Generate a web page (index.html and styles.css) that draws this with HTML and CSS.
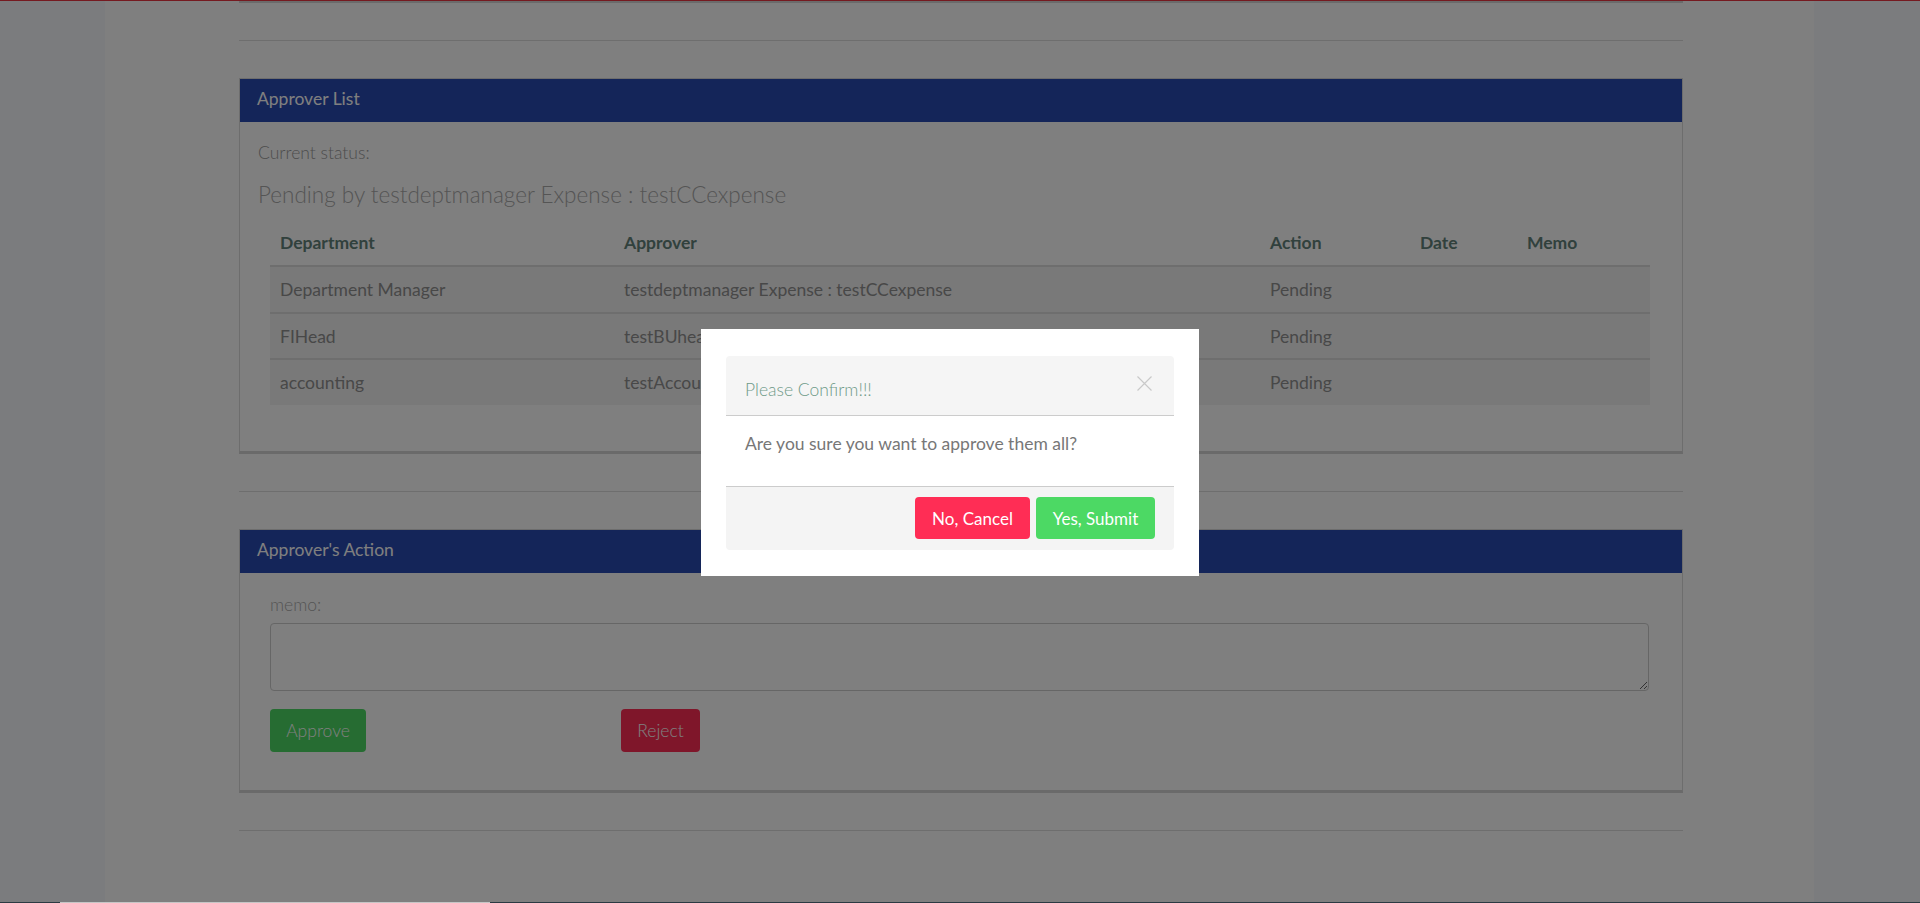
FILE: index.html
```html
<!DOCTYPE html>
<html lang="en">
<head>
<meta charset="utf-8">
<title>Approver List</title>
<link rel="stylesheet" href="styles.css">
</head>
<body>
<div class="topbar"></div>
<div class="main">
  <div class="container">
    <div class="prev-end"></div>
    <div class="divider"></div>

    <section class="panel">
      <div class="panel-heading">Approver List</div>
      <div class="panel-body list-body">
        <div class="status-label">Current status:</div>
        <div class="status-value">Pending by testdeptmanager Expense : testCCexpense</div>
        <table class="approvers">
          <thead>
            <tr>
              <th class="c-dept">Department</th>
              <th class="c-appr">Approver</th>
              <th class="c-act">Action</th>
              <th class="c-date">Date</th>
              <th class="c-memo">Memo</th>
            </tr>
          </thead>
          <tbody>
            <tr><td>Department Manager</td><td>testdeptmanager Expense : testCCexpense</td><td>Pending</td><td></td><td></td></tr>
            <tr><td>FIHead</td><td>testBUhead Expense : testCCexpense</td><td>Pending</td><td></td><td></td></tr>
            <tr><td>accounting</td><td>testAccounting Expense : testCCexpense</td><td>Pending</td><td></td><td></td></tr>
          </tbody>
        </table>
      </div>
    </section>

    <div class="divider"></div>

    <section class="panel">
      <div class="panel-heading">Approver's Action</div>
      <div class="panel-body action-body">
        <label class="memo-label" for="memo">memo:</label>
        <textarea id="memo" class="memo"></textarea>
        <div class="actions">
          <div class="action-cell"><button class="btn btn-approve">Approve</button></div>
          <div class="action-cell"><button class="btn btn-reject">Reject</button></div>
        </div>
      </div>
    </section>

    <div class="divider"></div>
  </div>
</div>

<div class="backdrop"></div>
<div class="modal">
  <div class="modal-inner">
    <div class="modal-header">
      <span class="modal-title">Please Confirm!!!</span>
      <svg class="modal-close" width="15" height="15" viewBox="0 0 15 15"><path d="M0.5 0.5 L14.5 14.5 M14.5 0.5 L0.5 14.5" stroke="#c9c9c9" stroke-width="1.2" fill="none"/></svg>
    </div>
    <div class="modal-body">Are you sure you want to approve them all?</div>
    <div class="modal-footer">
      <button class="mbtn mbtn-cancel">No, Cancel</button>
      <button class="mbtn mbtn-submit">Yes, Submit</button>
    </div>
  </div>
</div>

<div class="bottombar"><div class="bottombar-seg"></div></div>
</body>
</html>
```
FILE: styles.css
```css
html, body {
  margin: 0;
  padding: 0;
  height: 100%;
  overflow: hidden;
}
body {
  background: #f6f8fc;
  font-family: Lato, "Open Sans", "Liberation Sans", sans-serif;
  color: #888;
}
.topbar {
  height: 1px;
  background: #ea3540;
}
.main {
  margin-left: 105px;
  width: 1709px;
  min-height: 902px;
  background: #fff;
}
.container {
  width: 1444px;
  margin-left: 134px;
}
.prev-end {
  height: 0;
  border-bottom: 2px solid #d6d6d6;
}
.divider {
  height: 1px;
  background: #dcdcdc;
  margin: 37px 0;
}
.panel {
  border: 1px solid #dadada;
  border-bottom: 3px solid #d4d4d4;
  margin-bottom: 2px;
}
.panel-heading {
  height: 43px;
  box-sizing: border-box;
  line-height: 24px;
  padding: 8px 17px 0;
  background: #284ab2;
  color: #fff;
  font-size: 17.5px;
}
.list-body {
  padding: 19px 18px 46px 18px;
}
.status-label {
  font-size: 17.5px;
  line-height: 23px;
  font-weight: 300;
  color: #9a9a9a;
}
.status-value {
  margin-top: 16px;
  font-size: 22.5px;
  line-height: 30px;
  font-weight: 300;
  color: #aaa;
}
.approvers {
  margin: 10px 14px 0 12px;
  width: 1380px;
  border-collapse: collapse;
  table-layout: fixed;
  font-size: 17.5px;
}
.approvers th {
  text-align: left;
  font-weight: 700;
  color: #62827a;
  padding: 11px 10px;
  line-height: 23px;
  border-bottom: 2px solid #dcdcdc;
}
.approvers td {
  padding: 11px 10px 10.5px;
  line-height: 23px;
  color: #909090;
  background: #f2f2f2;
  border-top: 2px solid #dcdcdc;
  white-space: nowrap;
  overflow: hidden;
}
.approvers tbody tr:first-child td {
  border-top: 0;
}
.c-dept { width: 324px; }
.c-appr { width: 626px; }
.c-act { width: 130px; }
.c-date { width: 87px; }
.c-memo { width: auto; }

.action-body {
  padding: 21px 33px 38px 30px;
}
.memo-label {
  display: block;
  font-size: 17.5px;
  line-height: 22px;
  font-weight: 300;
  color: #aaa;
}
.memo {
  display: block;
  box-sizing: border-box;
  margin-top: 7px;
  width: 100%;
  height: 68px;
  border: 1px solid #cccccc;
  border-radius: 4px;
  resize: vertical;
  font-family: inherit;
}
.actions {
  display: grid;
  grid-template-columns: 351px auto;
  margin-top: 18px;
}
.btn {
  height: 43px;
  padding: 0 12px;
  border: 0;
  border-radius: 4px;
  color: #fff;
  font-family: inherit;
  font-size: 17.5px;
  font-weight: 300;
}
.btn-approve { background: #4cd964; width: 96px; }
.btn-reject { background: #ff2d55; width: 79px; }

.backdrop {
  position: fixed;
  inset: 0;
  background: rgba(0, 0, 0, 0.5);
}
.modal {
  position: absolute;
  left: 701px;
  top: 329px;
  width: 498px;
  height: 247px;
  box-sizing: border-box;
  padding: 27px 25px 26px;
  background: #fff;
}
.modal-inner {
  border-radius: 4px;
  overflow: hidden;
}
.modal-header {
  position: relative;
  box-sizing: border-box;
  height: 60px;
  padding: 22px 19px 0;
  background: #f5f5f5;
  border-bottom: 1px solid #cccccc;
}
.modal-title {
  display: block;
  font-size: 17.5px;
  line-height: 24px;
  font-weight: 300;
  color: #6f9a88;
}
.modal-close {
  position: absolute;
  top: 20px;
  right: 22px;
}
.modal-body {
  height: 70px;
  box-sizing: border-box;
  padding: 16px 19px;
  font-size: 17.5px;
  line-height: 24px;
  color: #777;
  background: #fff;
}
.modal-footer {
  display: flex;
  justify-content: flex-end;
  gap: 6px;
  padding: 10px 19px 11px;
  border-top: 1px solid #cccccc;
  background: #f4f4f4;
}
.mbtn {
  height: 42px;
  padding: 0 12px;
  border: 0;
  border-radius: 4px;
  color: #fff;
  font-family: inherit;
  font-size: 17px;
}
.mbtn-cancel { background: #ff2d55; width: 115px; }
.mbtn-submit { background: #4cd964; width: 119px; }

.bottombar {
  position: fixed;
  left: 0;
  right: 0;
  bottom: 0;
  height: 1px;
  background: #2b3a42;
}
.bottombar-seg {
  margin-left: 60px;
  width: 430px;
  height: 1px;
  background: #c6c6c6;
}
```
